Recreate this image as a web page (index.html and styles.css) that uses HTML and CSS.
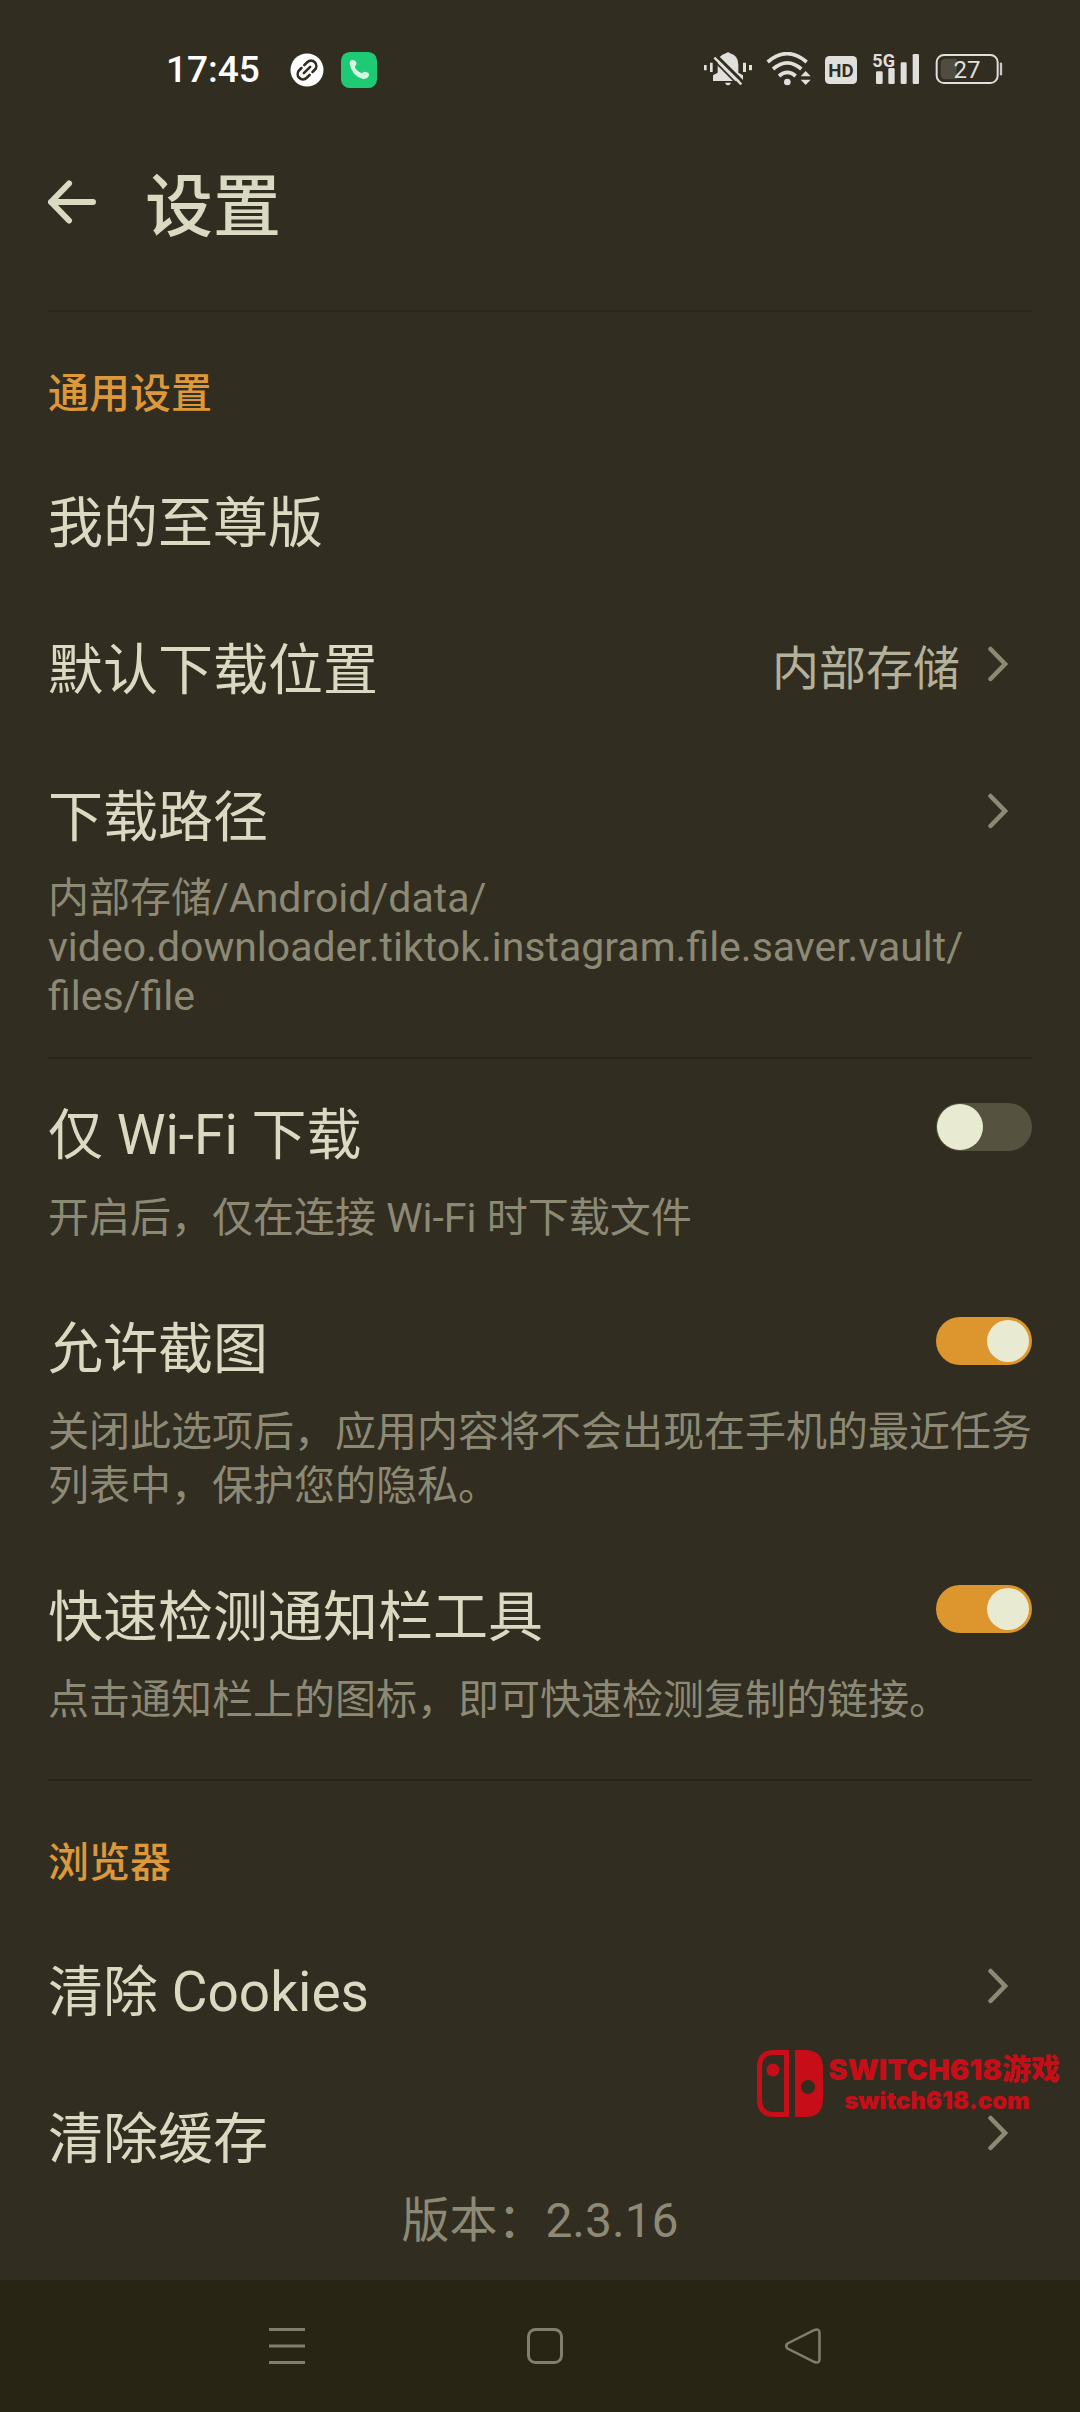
FILE: index.html
```html
<!DOCTYPE html>
<html lang="zh-CN">
<head>
<meta charset="utf-8">
<meta name="viewport" content="width=device-width, initial-scale=1">
<title>设置</title>
<link rel="stylesheet" href="styles.css">
</head>
<body>
<svg class="defs" aria-hidden="true">
  <symbol id="chevron" viewBox="0 0 20 52"><path d="M2.500 11 17 26 2.500 41" fill="none" stroke="currentColor" stroke-width="4.500" stroke-linecap="round"/></symbol>
</svg>
<div class="page">
  <div class="status">
    <span class="clock">17:45</span>
    <svg class="link-icon" width="34" height="34" viewBox="0 0 34 34" aria-hidden="true">
      <circle cx="17" cy="17" r="16.500" fill="#fff"/>
      <g fill="none" stroke="#322d21" stroke-width="2.600" stroke-linecap="round" transform="rotate(-45 17 17)">
        <path d="M12.500 17h9"/>
        <path d="M14.500 11.700h-3.200a5.300 5.300 0 0 0 0 10.600h4.200"/>
        <path d="M19.500 22.300h3.200a5.300 5.300 0 0 0 0-10.600h-4.200"/>
      </g>
    </svg>
    <svg width="36" height="36" viewBox="0 0 108 108" aria-hidden="true">
      <rect width="108" height="108" rx="26" fill="#1ecb74"/>
      <path d="M28 26q9-5 16 2 6 9-3 16 5 12 21 20 7-8 16-3 9 3 5 12-5 10-17 8Q33 72 26 36 26 29 28 26Z" fill="#d5f8e2"/>
    </svg>
    <span class="spacer"></span>
    <svg width="50" height="36" viewBox="42 66 150 108" aria-hidden="true">
      <g fill="#e0dfdb">
        <path d="M45 105h8v16h-8zM63 98h8v28h-8zM162 98h9v28h-9zM180 105h9v16h-9z"/>
        <path d="M111 70q6-6 12 0 25 7 25 33v25l14 8v17H72v-17l14-8v-27q0-24 25-31ZM108 158h18q-3 8-9 8t-9-8Z"/>
      </g>
      <path d="M81 76 166 160" stroke="#322d21" stroke-width="9"/>
      <path d="M76 83 157 163" stroke="#e0dfdb" stroke-width="7"/>
      <path d="M71 88 146 164" stroke="#322d21" stroke-width="5"/>
    </svg>
    <svg width="46" height="36" viewBox="229 66 138 108" aria-hidden="true">
      <g fill="none" stroke="#e0dfdb" stroke-width="11">
        <path d="M234 96q58-50 117 0M250 117q43-37 85 0M268 138q25-22 50 0"/>
      </g>
      <circle cx="293" cy="156" r="10" fill="#e0dfdb"/>
      <path d="M333 139l15-16 15 16zM333 149l15 16 15-16z" fill="#e0dfdb"/>
    </svg>
    <svg width="32" height="36" viewBox="402 66 96 108" aria-hidden="true">
      <rect x="402" y="78" width="96" height="84" rx="13" fill="#e0dfdb"/>
      <text x="450" y="141" text-anchor="middle" class="hd">HD</text>
    </svg>
    <svg class="signal" width="48" height="36" viewBox="546 66 144 108" aria-hidden="true">
      <g fill="#e0dfdb">
        <rect x="558" y="124" width="20" height="38" rx="4"/>
        <rect x="595" y="114" width="19" height="48" rx="4"/>
        <rect x="632" y="97" width="18" height="65" rx="4"/>
        <rect x="668" y="72" width="19" height="90" rx="4"/>
      </g>
      <text x="547" y="110" class="net">5G</text>
    </svg>
    <svg width="68" height="36" viewBox="733 66 204 108" aria-hidden="true">
      <rect x="738" y="75" width="183" height="84" rx="22" fill="none" stroke="#e0dfdb" stroke-width="6"/>
      <path d="M766 86h32v62h-32q-16 0-16-16v-30q0-16 16-16Z" fill="#514c40"/>
      <path d="M931 101v32" stroke="#c9c8c2" stroke-width="7" stroke-linecap="round"/>
      <text x="829" y="144" text-anchor="middle" class="level">27</text>
    </svg>
  </div>

  <header class="header">
    <button class="back" aria-label="返回">
      <svg width="48" height="66" viewBox="0 0 48 66"><path d="M3 33H45M21 14.500 3 33 21 51.500" fill="none" stroke="currentColor" stroke-width="6" stroke-linecap="round" stroke-linejoin="round"/></svg>
    </button>
    <h1 class="title">设置</h1>
  </header>

  <main class="content">
    <section class="group">
      <h2 class="heading">通用设置</h2>
      <button class="row"><span class="name">我的至尊版</span></button>
      <button class="row">
        <span class="name">默认下载位置</span>
        <span class="more"><span class="value">内部存储</span><svg class="chevron"><use href="#chevron"/></svg></span>
      </button>
      <button class="row row-detail">
        <span class="name">下载路径</span>
        <span class="more"><svg class="chevron"><use href="#chevron"/></svg></span>
        <span class="desc path">内部存储/Android/data/<wbr>video.downloader.tiktok.instagram.file.saver.vault/<wbr>files/file</span>
      </button>
    </section>

    <section class="group switches">
      <label class="row row-switch">
        <span class="name">仅 Wi-Fi 下载</span>
        <input class="switch" type="checkbox" role="switch">
        <span class="desc">开启后，仅在连接 Wi-Fi 时下载文件</span>
      </label>
      <label class="row row-switch">
        <span class="name">允许截图</span>
        <input class="switch" type="checkbox" role="switch" checked>
        <span class="desc">关闭此选项后，应用内容将不会出现在手机的最近任务列表中，保护您的隐私。</span>
      </label>
      <label class="row row-switch">
        <span class="name">快速检测通知栏工具</span>
        <input class="switch" type="checkbox" role="switch" checked>
        <span class="desc">点击通知栏上的图标，即可快速检测复制的链接。</span>
      </label>
    </section>

    <section class="group">
      <h2 class="heading">浏览器</h2>
      <button class="row">
        <span class="name">清除 Cookies</span>
        <span class="more"><svg class="chevron"><use href="#chevron"/></svg></span>
      </button>
      <button class="row row-last">
        <span class="name">清除缓存</span>
        <span class="more"><svg class="chevron"><use href="#chevron"/></svg></span>
      </button>
    </section>
  </main>

  <footer class="version">版本：2.3.16</footer>

  <nav class="navbar">
    <button class="key" aria-label="最近任务"><svg width="36" height="36" viewBox="0 0 36 36"><path d="M0 1.500H36M0 18H36M0 34.500H36" stroke="currentColor" stroke-width="3"/></svg></button>
    <button class="key" aria-label="主屏幕"><svg width="36" height="36" viewBox="0 0 36 36"><rect x="1.500" y="1.500" width="33" height="33" rx="7" fill="none" stroke="currentColor" stroke-width="3"/></svg></button>
    <button class="key" aria-label="返回"><svg width="36" height="36" viewBox="0 0 36 36"><path d="M2.500 15.500 29.500 2Q34.500 0 34.500 5V31Q34.500 36 29.500 34L2.500 20.500Q0 18 2.500 15.500Z" fill="none" stroke="currentColor" stroke-width="2.500"/></svg></button>
  </nav>

  <div class="watermark">
    <svg width="66" height="67" viewBox="0 0 66 67" aria-hidden="true">
      <path d="M29.500 2.500V64.500H17Q2.500 64.500 2.500 50V17Q2.500 2.500 17 2.500Z" fill="none" stroke="#c70d17" stroke-width="5"/>
      <circle cx="16" cy="20" r="6.500" fill="#c70d17"/>
      <path fill-rule="evenodd" d="M38 0H48Q66 0 66 18V49Q66 67 48 67H38ZM51 30a7 7 0 1 0 .01 0Z" fill="#c70d17"/>
    </svg>
    <div class="mark-text">
      <span class="mark-name">SWITCH618游戏</span>
      <span class="mark-url">switch618.com</span>
    </div>
  </div>
</div>
</body>
</html>
```
FILE: styles.css
```css
* {
  box-sizing: border-box;
}

body {
  margin: 0;
  background: #322d21;
  color: #dad9c1;
  font-family: Roboto, "Noto Sans CJK SC", sans-serif;
}

button {
  margin: 0;
  padding: 0;
  border: 0;
  background: none;
  color: inherit;
  font: inherit;
  text-align: left;
}

svg {
  display: block;
  flex: none;
}

.defs {
  position: absolute;
  width: 0;
  height: 0;
}

.page {
  position: relative;
  display: flex;
  flex-direction: column;
  min-height: 100vh;
}

/* Status bar */
.status {
  display: flex;
  align-items: center;
  gap: 13px;
  padding: 52px 77px 81px 166px;
}

.clock {
  color: #fff;
  font-size: 37px;
  font-weight: 500;
  line-height: 36px;
}

.link-icon {
  margin: 0 4px 0 17px;
}

.spacer {
  flex: 1;
}

.signal {
  margin: 0 2px;
  overflow: visible;
}

.hd {
  fill: #322d21;
  font-size: 56px;
  font-weight: 700;
}

.net {
  fill: #e0dfdb;
  stroke: #322d21;
  stroke-width: 6px;
  paint-order: stroke;
  font-size: 54px;
  font-weight: 700;
}

.level {
  fill: #e0dfdb;
  font-size: 72px;
}

/* Title bar */
.header {
  display: flex;
  align-items: flex-start;
  gap: 49px;
  padding: 0 48px 61px;
}

.title {
  margin: 0;
  font-size: 68px;
  font-weight: 500;
  line-height: 78px;
  padding-bottom: 2px;
}

/* Settings list */
.content {
  padding: 0 48px;
}

.group {
  border-top: 2px solid #292614;
}

.switches {
  padding: 8px 0 16px;
}

.heading {
  margin: 0;
  padding: 55px 0 29px;
  color: #dd983a;
  font-size: 41px;
  font-weight: 500;
  line-height: 54px;
}

.row {
  display: grid;
  grid-template-columns: 1fr auto;
  align-items: start;
  row-gap: 23px;
  width: 100%;
  padding: 41px 0;
}

.row-detail {
  padding-bottom: 36px;
}

.row-switch {
  padding: 36px 0;
}

.row-last {
  padding-bottom: 0;
}

.name {
  font-size: 55px;
  line-height: 65px;
}

.more {
  display: flex;
  align-items: flex-start;
  gap: 28px;
  padding-right: 24px;
  color: #8c8a75;
}

.value {
  color: #b3b199;
  font-size: 47px;
  line-height: 62px;
}

.chevron {
  width: 20px;
  height: 52px;
}

.desc {
  grid-column: 1 / -1;
  color: #8c8a75;
  font-size: 41px;
  line-height: 54px;
}

.path {
  padding-top: 1px;
  line-height: 49px;
}

.switch {
  appearance: none;
  display: flex;
  width: 96px;
  height: 48px;
  margin: 0;
  padding: 1px;
  border-radius: 24px;
  background: #565240;
}

.switch::before {
  content: "";
  width: 46px;
  border-radius: 50%;
  background: #e8ebd1;
}

.switch:checked {
  justify-content: flex-end;
  padding: 3px;
  background: #dd952d;
}

.switch:checked::before {
  width: 42px;
}

/* Version and system keys */
.version {
  margin-top: auto;
  padding: 18px 48px 28px;
  color: #8c8a75;
  font-size: 48px;
  line-height: 62px;
  text-align: center;
}

.navbar {
  display: grid;
  grid-template-columns: repeat(3, 1fr);
  padding: 0 148px 0 158px;
  background: #282514;
}

.key {
  display: flex;
  justify-content: center;
  padding: 48px 0;
  color: #807e6c;
}

/* Site mark over the list */
.watermark {
  position: absolute;
  right: 20px;
  bottom: 295px;
  display: flex;
  align-items: center;
  gap: 5px;
  color: #c70d17;
  font-family: Inter, "Noto Sans CJK SC", sans-serif;
  font-weight: 900;
}

.mark-text {
  display: flex;
  flex-direction: column;
}

.mark-name {
  font-size: 29px;
  line-height: 34px;
}

.mark-url {
  padding-left: 16px;
  font-size: 24px;
  line-height: 28px;
}
```
